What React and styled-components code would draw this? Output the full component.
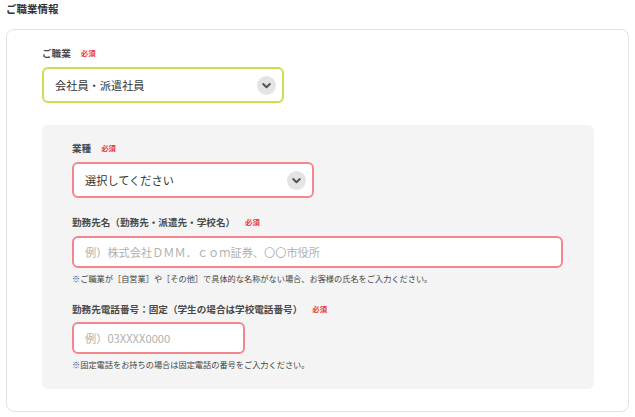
import React from "react";
import styled, { createGlobalStyle } from "styled-components";

const Global = createGlobalStyle`
  html, body { margin: 0; padding: 0; background: #fff; }
  body { font-family: "Noto Sans CJK JP", "Noto Sans", sans-serif; color: #333; }
  * { box-sizing: border-box; }
`;

const Page = styled.div`
  width: 635px;
  height: 417px;
  overflow: hidden;
`;

const Title = styled.h2`
  margin: 0;
  padding-left: 6px;
  font-size: 10.5px;
  line-height: 18px;
  font-weight: 700;
  color: #333;
`;

const Card = styled.section`
  margin: 11px 0 0 6px;
  width: 623px;
  height: 383px;
  border: 1px solid #e3e3e3;
  border-radius: 8px;
  padding: 16px 33px 20px 35px;
`;

const Panel = styled.div`
  margin-top: 22px;
  width: 552px;
  background: #f4f4f4;
  border-radius: 6px;
  padding: 16px 30px 19px 30px;
`;

const Field = styled.div`
  margin-top: ${(p) => p.$gap || 0}px;
`;

const LabelRow = styled.div`
  display: flex;
  align-items: center;
  height: 14px;
  margin-bottom: ${(p) => p.$mb || 7}px;
`;

const Label = styled.span`
  font-size: 9.6px;
  font-weight: 700;
  color: #4a4a4a;
  line-height: 14px;
`;

const Required = styled.span`
  margin-left: 10px;
  font-size: 7.4px;
  font-weight: 700;
  color: #e8343c;
  line-height: 14px;
`;

const SelectBox = styled.div`
  width: ${(p) => p.$w}px;
  height: 36px;
  border: 2px solid ${(p) => (p.$ok ? "#c8df4e" : "#f5868e")};
  border-radius: 6px;
  background: #fff;
  display: flex;
  align-items: center;
  justify-content: space-between;
  padding: 0 6px 0 11px;
`;

const SelectText = styled.span`
  font-size: 11.2px;
  color: #333;
`;

const Chevron = styled.span`
  width: 19px;
  height: 19px;
  border-radius: 50%;
  background: #e4e4e4;
  display: flex;
  align-items: center;
  justify-content: center;
`;

const TextInput = styled.div`
  width: ${(p) => p.$w}px;
  height: 32px;
  border: 2px solid #f5868e;
  border-radius: 6px;
  background: #fff;
  display: flex;
  align-items: center;
  padding-left: 11px;
  font-size: 11.2px;
  color: #b0b0b0;
  white-space: nowrap;
`;

const Note = styled.p`
  margin: 4px 0 0;
  font-size: 8.2px;
  line-height: 12px;
  color: #444;
  white-space: nowrap;
`;

const ChevronIcon = () => (
  <svg width="11" height="11" viewBox="0 0 10 10">
    <path d="M2 3.6 L5 6.6 L8 3.6" fill="none" stroke="#555" strokeWidth="1.8" strokeLinecap="round" strokeLinejoin="round" />
  </svg>
);

const Select = ({ w, ok, children }) => (
  <SelectBox $w={w} $ok={ok}>
    <SelectText>{children}</SelectText>
    <Chevron>
      <ChevronIcon />
    </Chevron>
  </SelectBox>
);

export default function App() {
  return (
    <Page>
      <Global />
      <Title>ご職業情報</Title>
      <Card>
        <Field>
          <LabelRow>
            <Label>ご職業</Label>
            <Required>必須</Required>
          </LabelRow>
          <Select w={242} ok>会社員・派遣社員</Select>
        </Field>
        <Panel>
          <Field>
            <LabelRow>
              <Label>業種</Label>
              <Required>必須</Required>
            </LabelRow>
            <Select w={242}>選択してください</Select>
          </Field>
          <Field $gap={17}>
            <LabelRow>
              <Label>勤務先名（勤務先・派遣先・学校名）</Label>
              <Required>必須</Required>
            </LabelRow>
            <TextInput $w={491}>例）株式会社ＤＭＭ．ｃｏｍ証券、〇〇市役所</TextInput>
            <Note>※ご職業が［自営業］や［その他］で具体的な名称がない場合、お客様の氏名をご入力ください。</Note>
          </Field>
          <Field $gap={18}>
            <LabelRow $mb={6}>
              <Label>勤務先電話番号：固定（学生の場合は学校電話番号）</Label>
              <Required>必須</Required>
            </LabelRow>
            <TextInput $w={173}>例）03XXXX0000</TextInput>
            <Note>※固定電話をお持ちの場合は固定電話の番号をご入力ください。</Note>
          </Field>
        </Panel>
      </Card>
    </Page>
  );
}
